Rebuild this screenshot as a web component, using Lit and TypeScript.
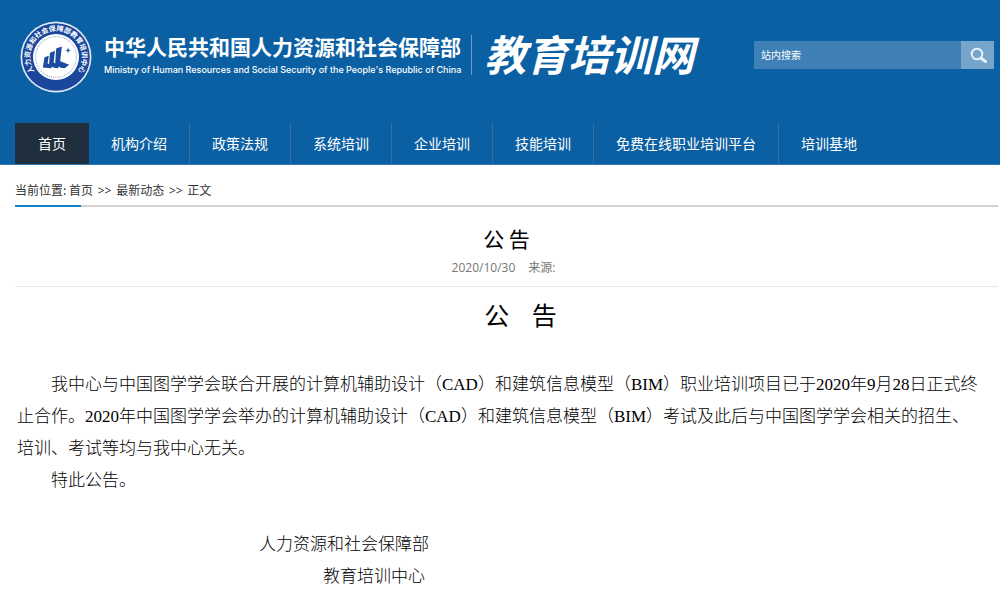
import { LitElement, html, css } from "lit";
import { customElement } from "lit/decorators.js";

const NAV = ["首页", "机构介绍", "政策法规", "系统培训", "企业培训", "技能培训", "免费在线职业培训平台", "培训基地"];

@customElement("site-seal")
export class SiteSeal extends LitElement {
  static styles = css`
    :host { display: block; flex: none; }
    svg { display: block; }
    .ring { font: 700 7px "Noto Sans CJK SC", sans-serif; fill: #fff; }
  `;
  render() {
    return html`<svg width="72" height="72" viewBox="0 0 72 72" aria-hidden="true">
      <circle cx="36" cy="36" r="35.5" fill="#dfe9f6" />
      <circle cx="36" cy="36" r="33.8" fill="#1a479c" />
      <circle cx="36" cy="36" r="23" fill="#fff" />
      <circle cx="36" cy="36" r="20.5" fill="none" stroke="#a3b4d8" stroke-width="1.2" stroke-dasharray="1 0.9" />
      <path id="arc" d="M14.5 50.5 A26 26 0 1 1 54 54.8" fill="none" />
      <text class="ring"><textPath href="#arc">人力资源和社会保障部教育培训中心</textPath></text>
      <g fill="#1d4b9d">
        <path d="M24.6 36.2l4.2-1.4-1.2 7.6 5.2 2.2-1.6 2.6-8.4-.6z" />
        <path d="M30 31.8l5-2-1.4 11.6 6 2.8-1.6 3-4.2-.4-4.8-3.4z" />
        <path d="M36.2 27.6l5.6-2.2-1.6 14.8 9 3.6-4.6 3.4-4-.4-5.4-4.4z" />
        <path d="M45.2 29.4l2.2-.6.7-2.6.7 2.6 2.2.6-2.2.6-.7 2.6-.7-2.6z" />
      </g>
    </svg>`;
  }
}

@customElement("app-root")
export class AppRoot extends LitElement {
  static styles = css`
    :host {
      display: block;
      min-height: 100vh;
      background: #fff;
      color: #333;
      font: 12px/20px "Noto Sans CJK SC", sans-serif;
    }
    a { color: inherit; text-decoration: none; }
    header { background: #0b5fa3; border-bottom: 1px solid #2d76b1; }
    .banner { display: flex; align-items: center; box-sizing: border-box; height: 123px; padding: 20px 6px 30px 20px; }
    .ministry { margin-left: 12px; padding-bottom: 2px; color: #fff; white-space: nowrap; }
    .zh { font-size: 21px; line-height: 24px; font-weight: 700; }
    .en { font: 500 9px/16px Inter, "Liberation Sans", sans-serif; margin-top: 4px; }
    .site {
      margin: 0 0 4px 10px;
      padding: 0 0 4px 12px;
      border-left: 1px solid #6b9fca;
      color: #fff;
      font-size: 42px;
      line-height: 36px;
      font-weight: 700;
      font-style: italic;
      white-space: nowrap;
    }
    .search { display: flex; width: 240px; height: 28px; margin: 0 0 4px auto; }
    .search input {
      flex: 1;
      min-width: 0;
      border: 0;
      border-radius: 0;
      padding: 0 7px;
      background: #3f81b6;
      color: #fff;
      font: 10px/28px "Noto Sans CJK SC", sans-serif;
    }
    .search input::placeholder { color: #fff; opacity: 1; }
    .search button { width: 33px; border: 0; padding: 3px 0 0 2px; background: #76a5cb; display: grid; place-items: center; }
    nav { display: flex; padding-left: 15px; }
    nav a {
      padding: 0 22px;
      border-right: 1px solid #376f9f;
      color: #fff;
      font-size: 14px;
      line-height: 41px;
      white-space: nowrap;
    }
    nav a:first-child { padding: 0 23px; background: #1f2f3d; border: 0; }
    nav a:last-child { border: 0; }
    main { padding: 0 2px 0 15px; }
    .crumbs { display: flex; margin-top: 14px; border-bottom: 2px solid #d2d2d2; line-height: 22px; }
    .crumbs .trail { white-space: pre; padding-bottom: 3px; }
    .crumbs .sep { margin: 0 2px; font-family: "Open Sans", sans-serif; }
    .crumbs::before { content: ""; width: 66px; height: 2px; margin: 0 -66px -2px 0; background: #0e82c8; align-self: flex-end; }
    h1, h2 { margin: 0; color: #000; font-weight: 400; text-align: center; }
    h1 { margin-top: 15px; font-size: 21px; line-height: 32px; }
    .meta {
      display: flex;
      justify-content: center;
      gap: 13px;
      padding: 4px 6px 8px 0;
      border-bottom: 1px solid #e6e6e6;
      color: #777;
      line-height: 20px;
      font-family: "Open Sans", "Noto Sans CJK SC", sans-serif;
    }
    h2 { margin: 7px 0 35px; font-size: 25px; line-height: 40px; text-indent: 28px; }
    .body { color: #000; font: 300 17px/32px "Liberation Serif", "Noto Sans CJK SC", serif; padding-left: 2px; }
    .body p { margin: 0; text-indent: 2em; white-space: nowrap; }
    .sign { display: flex; flex-direction: column; align-items: flex-end; width: 412px; margin-top: 32px; }
    .sign span:last-child { padding-right: 4px; }
  `;

  render() {
    return html`
      <header>
        <div class="banner">
          <site-seal></site-seal>
          <div class="ministry">
            <div class="zh">中华人民共和国人力资源和社会保障部</div>
            <div class="en">Ministry of Human Resources and Social Security of the People's Republic of China</div>
          </div>
          <div class="site">教育培训网</div>
          <form class="search" @submit=${(e: Event) => e.preventDefault()}>
            <input type="text" placeholder="站内搜索" aria-label="站内搜索" />
            <button type="submit" aria-label="搜索">
              <svg width="18" height="18" viewBox="0 0 18 18" fill="none" stroke="#e8f0f8" stroke-linecap="round">
                <circle cx="7" cy="7" r="5.3" stroke-width="2" />
                <path d="M11.5 11.5L15.5 14.5" stroke-width="3" />
              </svg>
            </button>
          </form>
        </div>
        <nav>${NAV.map((t) => html`<a href="#">${t}</a>`)}</nav>
      </header>
      <main>
        <div class="crumbs"><span class="trail">当前位置: <a href="#">首页</a> <span class="sep">&gt;&gt;</span> <a href="#">最新动态</a> <span class="sep">&gt;&gt;</span> 正文</span></div>
        <h1>公 告</h1>
        <div class="meta"><span>2020/10/30</span><span>来源:</span></div>
        <h2>公&nbsp;&nbsp;&nbsp;&nbsp;告</h2>
        <div class="body">
          <p>我中心与中国图学学会联合开展的计算机辅助设计（CAD）和建筑信息模型（BIM）职业培训项目已于2020年9月28日正式终<br />止合作。2020年中国图学学会举办的计算机辅助设计（CAD）和建筑信息模型（BIM）考试及此后与中国图学学会相关的招生、<br />培训、考试等均与我中心无关。</p>
          <p>特此公告。</p>
          <div class="sign"><span>人力资源和社会保障部</span><span>教育培训中心</span></div>
        </div>
      </main>
    `;
  }
}
